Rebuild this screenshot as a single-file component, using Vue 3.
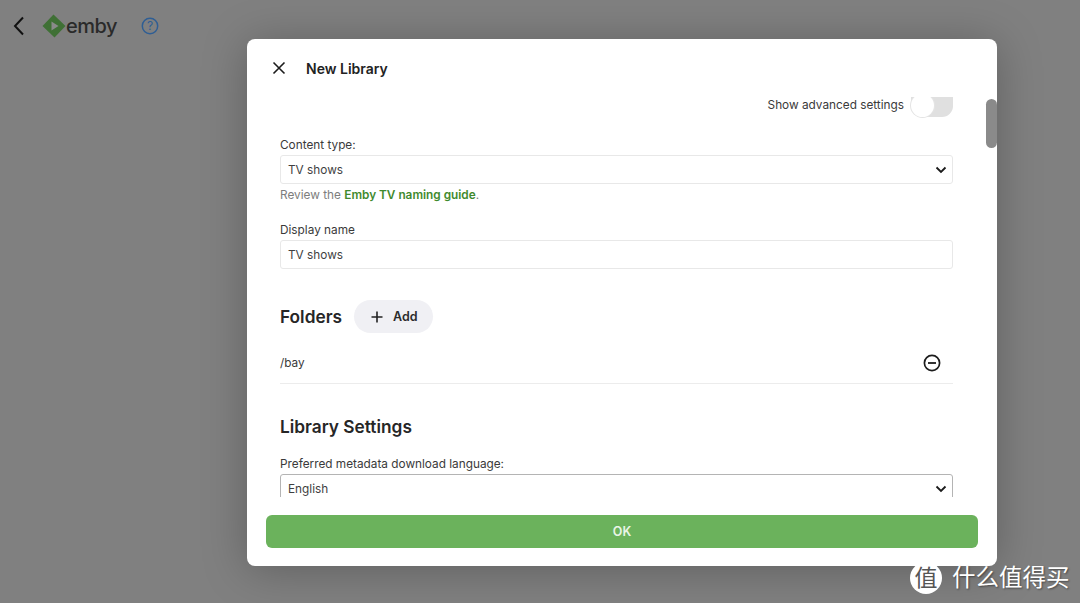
<script setup>
const watermark = '什么值得买'
</script>

<template>
  <div class="page">
    <header class="topbar">
      <button class="back" aria-label="Back">
        <svg width="14" height="22" viewBox="0 0 14 22"><path d="M11 2.500 3 11l8 8.500" fill="none" stroke="#111" stroke-width="2"/></svg>
      </button>
      <div class="logo">
        <svg width="24" height="24" viewBox="0 0 24 24">
          <path d="M11.500 .5 23.500 12 12.500 23.500 .5 12z" fill="#3f7035"/>
          <path d="M9.500 7.500 16.500 12 9.500 16.500z" fill="#8a8a8a"/>
        </svg>
        <span class="logo-text">emby</span>
      </div>
      <svg class="help" width="18" height="18" viewBox="0 0 18 18">
        <circle cx="9" cy="9" r="7.700" fill="none" stroke="#2f5e94" stroke-width="1.500"/>
        <text x="9" y="13" text-anchor="middle" class="help-q">?</text>
      </svg>
    </header>

    <section class="dialog">
      <div class="dialog-head">
        <svg class="close" width="14" height="14" viewBox="0 0 14 14"><path d="M1.500 1.500l11 11M12.500 1.500l-11 11" stroke="#1c1c1c" stroke-width="1.600" fill="none"/></svg>
        <h2>New Library</h2>
      </div>

      <div class="scroll">
        <div class="advanced">
          <span>Show advanced settings</span>
          <span class="toggle"><span class="knob"></span></span>
        </div>

        <label class="lbl">Content type:</label>
        <div class="field">
          <span>TV shows</span>
          <svg width="12" height="8" viewBox="0 0 12 8"><path d="M1.500 1.500 6 6l4.500-4.500" fill="none" stroke="#1a1a1a" stroke-width="1.800"/></svg>
        </div>
        <p class="hint">Review the <a>Emby TV naming guide</a>.</p>

        <label class="lbl second">Display name</label>
        <div class="field"><span>TV shows</span></div>

        <div class="folders-head">
          <h3>Folders</h3>
          <button class="add">
            <svg width="12" height="12" viewBox="0 0 12 12"><path d="M6 .5v11M.5 6h11" stroke="#222" stroke-width="1.600"/></svg>
            <span>Add</span>
          </button>
        </div>
        <div class="folder-row">
          <span>/bay</span>
          <svg width="18" height="18" viewBox="0 0 18 18"><circle cx="9" cy="9" r="7.600" fill="none" stroke="#1c1c1c" stroke-width="1.700"/><path d="M5 9h8" stroke="#1c1c1c" stroke-width="1.800"/></svg>
        </div>

        <h3 class="settings">Library Settings</h3>
        <label class="lbl third">Preferred metadata download language:</label>
        <div class="field dark">
          <span>English</span>
          <svg width="12" height="8" viewBox="0 0 12 8"><path d="M1.500 1.500 6 6l4.500-4.500" fill="none" stroke="#1a1a1a" stroke-width="1.800"/></svg>
        </div>
      </div>
      <div class="scrollbar"></div>

      <div class="foot"><button class="ok">OK</button></div>
    </section>

    <div class="mark">
      <span class="mark-badge">值</span>
      <span class="mark-text">{{ watermark }}</span>
    </div>
  </div>
</template>

<style scoped>
.page {
  position: relative;
  width: 1080px;
  height: 603px;
  overflow: hidden;
  background: #808080;
  font-family: Inter, "Noto Sans CJK SC", sans-serif;
  color: #2b2b2b;
}
.topbar {
  display: flex;
  align-items: center;
  height: 52px;
  padding-left: 12px;
}
.back {
  display: flex;
  padding: 0;
  border: 0;
  background: none;
}
.logo {
  display: flex;
  align-items: center;
  margin-left: 16px;
}
.logo-text {
  font-size: 20px;
  font-weight: 500;
  letter-spacing: -0.5px;
  color: #2a2a2a;
  line-height: 24px;
}
.help { margin-left: 24px; }
.help-q { font-size: 12px; fill: #2f5e94; font-family: Inter, sans-serif; }

.dialog {
  position: absolute;
  left: 247px;
  top: 39px;
  z-index: 1;
  width: 750px;
  height: 527px;
  background: #fff;
  border-radius: 8px;
  box-shadow: 0 4px 45px rgba(0, 0, 0, 0.26);
  overflow: hidden;
}
.dialog-head {
  display: flex;
  align-items: center;
  height: 58px;
  padding: 0 0 0 25px;
  box-sizing: border-box;
}
.close { flex: none; }
h2 {
  margin: 0 0 0 20px;
  font-size: 14px;
  font-weight: 600;
  color: #222;
}
.scroll {
  height: 400px;
  overflow: hidden;
  padding: 0 44px 0 33px;
  font-size: 11.800px;
}
.advanced {
  display: flex;
  justify-content: flex-end;
  align-items: flex-start;
  gap: 7px;
  height: 41px;
  line-height: 16px;
  color: #3a3a3a;
}
.toggle {
  position: relative;
  display: block;
  width: 42px;
  height: 20px;
  background: #e0e0e0;
  border-radius: 0 0 11px 11px;
}
.knob {
  position: absolute;
  left: 0;
  top: -3px;
  width: 23px;
  height: 23px;
  background: #fff;
  border-radius: 50%;
  box-shadow: 0 0 0 1px #e4e4e4;
}
.lbl {
  display: block;
  line-height: 14px;
  margin-bottom: 3px;
  color: #3a3a3a;
}
.second { margin-top: 20px; }
.field {
  display: flex;
  align-items: center;
  justify-content: space-between;
  box-sizing: border-box;
  height: 29px;
  padding: 0 5px 0 7px;
  border: 1px solid #e8e8e8;
  border-radius: 3px;
  color: #3f3f3f;
}
.hint {
  margin: 3px 0 0;
  line-height: 16px;
  color: #7d7d7d;
}
.hint a { color: #3f8a2e; font-weight: 600; }
.folders-head {
  display: flex;
  align-items: center;
  gap: 12px;
  margin-top: 31px;
}
h3 {
  margin: 0;
  font-size: 17.300px;
  font-weight: 600;
  color: #262626;
}
.add {
  display: flex;
  align-items: center;
  gap: 10px;
  height: 33px;
  padding: 0 15px 0 17px;
  border: 0;
  border-radius: 17px;
  background: #f0f0f4;
  font: 600 12.500px Inter, sans-serif;
  color: #2b2b2b;
}
.folder-row {
  display: flex;
  align-items: center;
  justify-content: space-between;
  height: 51px;
  box-sizing: border-box;
  padding: 9px 12px 0 0;
  border-bottom: 1px solid #ececec;
  color: #3a3a3a;
}
.settings { margin-top: 32px; line-height: 22px; }
.third { margin-top: 19px; }
.dark {
  border-color: #b4b4b4;
  height: 32px;
  padding-bottom: 3px;
}
.scrollbar {
  position: absolute;
  right: 0;
  top: 60px;
  width: 11px;
  height: 49px;
  background: #8a8a8a;
  border-radius: 6px;
}
.foot { padding: 18px 19px 0; }
.ok {
  display: block;
  width: 100%;
  height: 33px;
  border: 0;
  border-radius: 6px;
  background: #6bb25c;
  color: #e9f4e6;
  font: 600 12.500px Inter, sans-serif;
  padding: 0;
}
.mark {
  position: absolute;
  left: 910px;
  top: 562px;
  z-index: 2;
  display: flex;
  align-items: center;
  gap: 10px;
}
.mark-badge {
  width: 32px;
  height: 32px;
  border-radius: 50%;
  background: #fff;
  color: #555;
  font-size: 23px;
  line-height: 32px;
  text-align: center;
  clip-path: inset(4px 0 0 0);
}
.mark-text {
  font-size: 23.500px;
  font-weight: 400;
  line-height: 32px;
  color: #fff;
  text-shadow: 1px 1px 2px rgba(0, 0, 0, 0.45);
}
</style>
